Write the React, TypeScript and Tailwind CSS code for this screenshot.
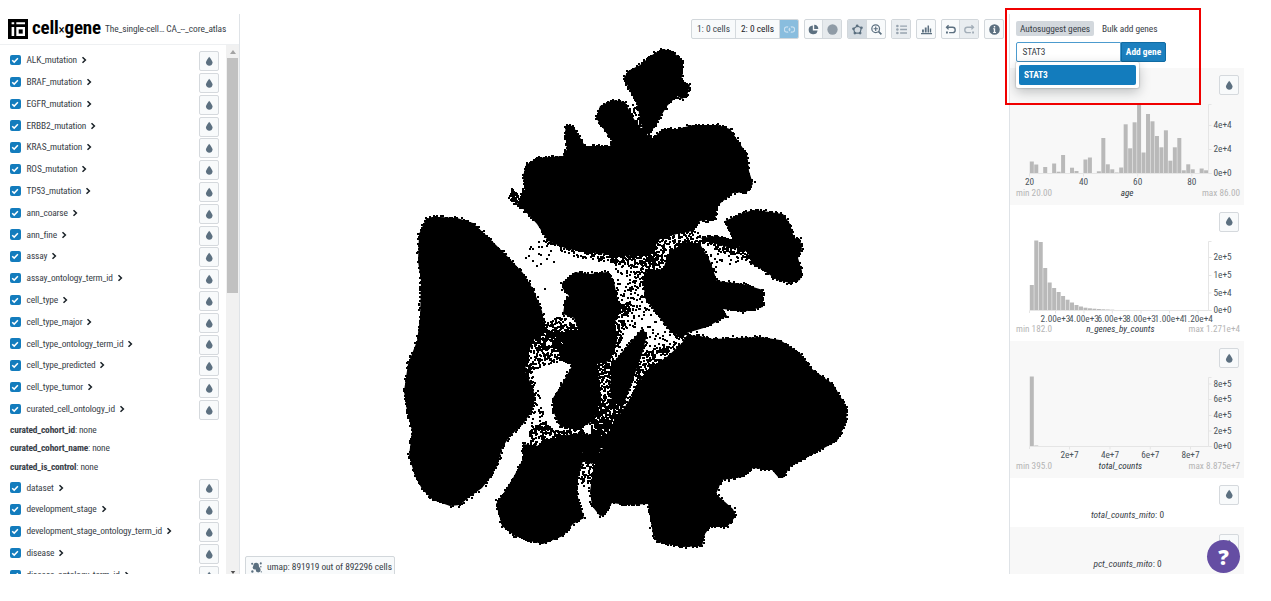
import React, { ReactNode } from "react";

type Pt = [number, number];

const FONT = "font-['Roboto_Condensed','Roboto',sans-serif] [font-stretch:75%]";

/* ---------- icons (16 × 16 grid) ---------- */

const Icon = ({ children, className = "" }: { children: ReactNode; className?: string }) => (
  <svg viewBox="0 0 16 16" className={`h-[11px] w-[11px] shrink-0 fill-current ${className}`}>
    {children}
  </svg>
);

const Drop = () => (
  <svg viewBox="0 0 16 16" className="h-[10.5px] w-[10.5px] shrink-0 fill-[#5c7080]">
    <path d="M7.88 1s-4.9 6.28-4.9 8.9c.01 2.82 2.34 5.1 4.99 5.1 2.65-.01 5.03-2.3 5.03-5.13C12.99 7.17 7.88 1 7.88 1z" />
  </svg>
);

const DropButton = () => (
  <div className="flex h-5 w-5 shrink-0 items-center justify-center rounded-[2px] border border-[#d5d9dd] bg-[#f8fafb]">
    <Drop />
  </div>
);

/* ---------- left sidebar ---------- */

const upper = [
  "ALK_mutation", "BRAF_mutation", "EGFR_mutation", "ERBB2_mutation", "KRAS_mutation",
  "ROS_mutation", "TP53_mutation", "ann_coarse", "ann_fine", "assay", "assay_ontology_term_id",
  "cell_type", "cell_type_major", "cell_type_ontology_term_id", "cell_type_predicted",
  "cell_type_tumor", "curated_cell_ontology_id",
];
const constants = ["curated_cohort_id", "curated_cohort_name", "curated_is_control"];
const lower = ["dataset", "development_stage", "development_stage_ontology_term_id", "disease", "disease_ontology_term_id"];

const Category = ({ name }: { name: string }) => (
  <div className="flex h-[21.81px] shrink-0 items-center pl-[10px] pr-[6.6px]">
    <div className="flex h-[10.5px] w-[10.5px] items-center justify-center rounded-[2px] bg-[#137cbd]">
      <svg viewBox="0 0 10 10" className="h-[10px] w-[10px] fill-none stroke-white stroke-[1.5]">
        <path d="M2.2 5.2 4.2 7.1 7.9 3.2" />
      </svg>
    </div>
    <span className="ml-[6px] whitespace-nowrap">{name}</span>
    <svg viewBox="0 0 6 8" className="ml-[4px] h-[8px] w-[6px] fill-none stroke-[#182026] stroke-[1.5]">
      <path d="M1.5 1.2 4.4 4 1.5 6.8" />
    </svg>
    <div className="ml-auto pt-[2px]"><DropButton /></div>
  </div>
);

const LeftSidebar = () => (
  <div className="flex h-[560px] w-[240px] shrink-0 flex-col border-r border-[#dfe3e7] tracking-[-0.11px]">
    <div className="flex h-[31px] shrink-0 items-center border-b border-[#eef0f2] pl-[8px]">
      <svg viewBox="0 0 20 20" className="h-5 w-5">
        <path d="M0 0h20v20H0z" className="fill-black" />
        <path d="M3.6 3.2h2.6v2H3.600zM3.600 8h2.600v9H3.600zM8.300 3.200H17v2H8.300zM8.300 8H17v9H8.300z" className="fill-white" />
        <path d="M10.700 10.400h4v4.200h-4z" className="fill-black" />
      </svg>
      <span className="ml-[4px] flex w-[69px] items-baseline whitespace-nowrap text-[19px] font-bold leading-5 tracking-[-0.2px] text-black">
        cell<span className="text-[13px] font-normal">×</span>gene
      </span>
      <span className="ml-[4px] whitespace-nowrap tracking-[-0.08px]">The_single-cell…</span>
      <span className="ml-[2px] whitespace-nowrap tracking-[-0.08px]">CA_--_core_atlas</span>
    </div>
    <div className="flex min-h-0 flex-1">
      <div className="flex min-w-0 flex-1 flex-col overflow-hidden pt-[4.300px]">
        {upper.map((n) => <Category key={n} name={n} />)}
        <div className="flex shrink-0 flex-col py-[1.2px] pl-[10px] tracking-[-0.14px]">
          {constants.map((n) => (
            <div key={n} className="flex h-[18.200px] items-center whitespace-pre">
              <b>{n}</b>: none
            </div>
          ))}
        </div>
        {lower.map((n) => <Category key={n} name={n} />)}
      </div>
      <div className="flex w-[13px] shrink-0 flex-col items-center overflow-hidden bg-[#f1f1f1]">
        <svg viewBox="0 0 6 4" className="mt-[5px] h-[4px] w-[6px] shrink-0 fill-[#a3a3a3]"><path d="M0 4 3 0 6 4z" /></svg>
        <div className="mt-[4px] h-[235px] w-[11px] shrink-0 bg-[#c1c1c1]" />
        <svg viewBox="0 0 6 4" className="mt-auto h-[3px] w-[6px] shrink-0 fill-[#505050]"><path d="M0 0h6L3 4z" /></svg>
      </div>
    </div>
  </div>
);

/* ---------- embedding scatter ---------- */

const clusters: Pt[][] = [
  [[426,218],[432,216],[440,216],[457,217],[473,222],[487,235],[507,255],[523,272],[533,288],[542,310],[545,327],[533,340],[528,353],[525,370],[533,387],[535,397],[532,410],[523,423],[510,435],[502,447],[498,463],[490,477],[482,487],[468,497],[460,504],[450,505],[433,499],[422,488],[415,475],[409,455],[412,430],[407,410],[404,390],[408,363],[417,340],[420,317],[421,280],[418,260],[419,233]],
  [[563,155],[537,157],[526,164],[523,175],[525,190],[519,201],[525,210],[537,223],[548,240],[567,248],[597,252],[627,255],[650,252],[660,238],[677,233],[693,230],[700,220],[715,218],[717,205],[733,192],[747,191],[753,183],[749,170],[747,153],[738,140],[730,128],[718,124],[693,124],[677,128],[663,128],[652,138],[643,130],[634,118],[628,107],[625,101],[613,99],[600,105],[596,117],[603,127],[612,140],[610,145],[597,145],[585,145],[578,133],[573,125],[566,124],[565,132],[567,148]],
  [[524,191],[530,200],[526,210],[517,203]],
  [[624,77],[628,70],[640,64],[652,54],[662,48],[672,50],[683,60],[683,72],[681,79],[690,84],[687,95],[682,98],[677,95],[667,105],[655,125],[649,134],[643,130],[637,103],[630,90]],
  [[725,220],[740,213],[753,209],[763,210],[783,213],[790,223],[794,237],[800,238],[802,248],[798,257],[802,270],[800,279],[790,282],[777,279],[763,269],[752,263],[748,252],[735,242]],
  [[700,237],[717,235],[733,240],[743,248],[727,246],[713,242]],
  [[670,250],[687,241],[700,243],[710,260],[717,280],[743,283],[763,289],[763,306],[743,311],[723,308],[727,315],[707,326],[687,332],[682,337],[670,330],[657,313],[645,297],[643,277],[647,270],[663,268]],
  [[687,334],[700,335],[713,338],[737,337],[760,336],[780,339],[800,352],[812,368],[833,383],[843,400],[847,407],[846,422],[837,440],[813,453],[790,466],[783,477],[778,476],[772,469],[753,467],[743,476],[722,479],[716,493],[733,508],[736,515],[727,526],[710,526],[705,533],[702,545],[683,546],[657,541],[653,533],[648,503],[627,504],[612,502],[605,514],[600,515],[592,505],[590,490],[593,470],[600,453],[609,433],[620,413],[632,395],[640,380],[650,367],[668,355],[682,342]],
  [[642,328],[647,333],[643,350],[637,367],[631,384],[623,405],[612,400],[610,387],[612,363],[623,350]],
  [[562,282],[575,271],[590,273],[607,271],[614,280],[617,297],[621,307],[614,323],[617,340],[610,360],[597,363],[600,387],[600,400],[593,420],[577,429],[560,425],[553,410],[553,397],[562,383],[572,365],[560,350],[567,340],[580,333],[574,317],[563,313],[565,300],[569,295],[563,288]],
  [[523,443],[540,445],[560,435],[582,432],[583,460],[578,477],[577,493],[584,517],[573,523],[563,535],[543,543],[530,540],[515,535],[502,525],[496,503],[505,490],[513,477],[523,458]],
  [[582,432],[603,437],[598,458],[592,463],[583,460]],
];

/* regions of scattered cells: outline and cells per square pixel */
const scattered: [Pt[], number][] = [
  [[[508,196],[512,188],[520,193],[524,186],[530,200],[526,210],[517,206]], 0.4],
  [[[540,240],[550,240],[660,250],[655,264],[610,262],[575,256]], 0.14],
  [[[580,246],[660,248],[652,272],[625,264],[590,256]], 0.18],
  [[[522,262],[536,232],[560,245],[545,300],[540,302]], 0.015],
  [[[612,258],[650,262],[648,300],[620,318],[614,280]], 0.07],
  [[[616,305],[632,300],[626,330],[612,368],[608,345]], 0.22],
  [[[630,270],[644,270],[652,300],[682,340],[650,355],[640,325],[625,330]], 0.05],
  [[[535,326],[552,318],[567,316],[582,333],[570,345],[535,348]], 0.3],
  [[[535,330],[572,330],[575,358],[545,364],[526,374],[526,345]], 0.22],
  [[[552,332],[585,330],[578,366],[562,360]], 0.7],
  [[[525,365],[533,370],[541,400],[545,420],[530,440],[533,400]], 0.09],
  [[[530,428],[545,420],[555,430],[585,428],[580,438],[530,448]], 0.35],
  [[[596,362],[612,360],[614,400],[622,405],[600,460],[588,455],[592,425]], 0.25],
  [[[596,400],[625,400],[608,446],[590,440]], 0.3],
  [[[582,455],[602,455],[592,480],[584,486],[578,480]], 0.15],
  [[[645,350],[676,342],[660,362],[640,384],[632,396],[634,376]], 0.3],
  [[[700,238],[735,236],[752,262],[735,256],[708,246]], 0.2],
  [[[708,248],[745,255],[735,270],[715,268]], 0.035],
  [[[655,238],[697,230],[705,242],[672,249],[660,272],[646,266]], 0.19],
  [[[750,457],[772,457],[770,470],[755,470]], 0.1],
  [[[632,104],[640,106],[644,128],[638,124]], 0.15],
  [[[704,215],[718,202],[716,220],[702,222]], 0.25],
];

const inside = (x: number, y: number, poly: Pt[]) => {
  let hit = false;
  for (let i = 0, j = poly.length - 1; i < poly.length; j = i++) {
    const [xi, yi] = poly[i];
    const [xj, yj] = poly[j];
    if (yi > y !== yj > y && x < ((xj - xi) * (y - yi)) / (yj - yi) + xi) hit = !hit;
  }
  return hit;
};

const buildCells = () => {
  let seed = 7919;
  const rnd = () => {
    seed = (seed * 1664525 + 1013904223) % 4294967296;
    return seed / 4294967296;
  };
  let d = "";
  const cell = (x: number, y: number) => {
    d += `M${Math.round(x)} ${Math.round(y)}h2v2h-2z`;
  };
  clusters.forEach((poly) => {
    poly.forEach(([x1, y1], i) => {
      const [x2, y2] = poly[(i + 1) % poly.length];
      const n = Math.ceil(Math.hypot(x2 - x1, y2 - y1) / 2.6);
      for (let k = 0; k < n; k++) {
        const t = k / n;
        const reach = rnd() < 0.12 ? 4.5 : 2;
        cell(x1 + (x2 - x1) * t - 1 + (rnd() - 0.5) * reach, y1 + (y2 - y1) * t - 1 + (rnd() - 0.5) * reach);
      }
    });
  });
  scattered.forEach(([poly, density]) => {
    const xs = poly.map((p) => p[0]);
    const ys = poly.map((p) => p[1]);
    const x0 = Math.min(...xs), w = Math.max(...xs) - x0;
    const y0 = Math.min(...ys), h = Math.max(...ys) - y0;
    const n = w * h * density;
    for (let k = 0; k < n; k++) {
      const x = x0 + rnd() * w, y = y0 + rnd() * h;
      if (inside(x, y, poly)) cell(x - 1, y - 1);
    }
  });
  return d;
};

const cells = buildCells();

const Scatter = () => (
  <svg viewBox="400 39 450 510" className="ml-[160px] block h-[510px] w-[450px] shrink-0 fill-black">
    {clusters.map((p, i) => <polygon key={i} points={p.map((q) => q.join(",")).join(" ")} />)}
    <path d={cells} />
  </svg>
);

/* ---------- toolbar ---------- */

const Tool = ({ className = "", children }: { className?: string; children: ReactNode }) => (
  <div className={`flex h-full items-center justify-center ${className}`}>{children}</div>
);

const Group = ({ className = "", children }: { className?: string; children: ReactNode }) => (
  <div className={`flex h-5 shrink-0 divide-x divide-[#d5dade] overflow-hidden rounded-[2px] border border-[#d2d7db] bg-[#f8fafb] text-[#5c7080] ${className}`}>
    {children}
  </div>
);

const Toolbar = () => (
  <div className="flex h-[26px] shrink-0 items-start justify-end gap-[5px] pr-[5px] pt-[5px]">
    <Group className="w-[108px]">
      <Tool className="w-[44px] text-[#3b4650]">1: 0 cells</Tool>
      <Tool className="w-[44px] text-[#182026]">2: 0 cells</Tool>
      <Tool className="flex-1 bg-[#89bdde] text-[#c9e0f0]">
        <Icon>
          <path d="M6.600 3.800a4.800 4.800 0 1 0 0 8.400 6.500 6.500 0 0 1-1.200-1.700 2.800 2.800 0 1 1 0-5 6.500 6.500 0 0 1 1.200-1.700zM9.400 3.800a4.800 4.800 0 1 1 0 8.400 6.500 6.500 0 0 0 1.200-1.700 2.800 2.800 0 1 0 0-5 6.500 6.500 0 0 0-1.200-1.700zM8 5a4.500 4.500 0 0 1 0 6 4.500 4.500 0 0 1 0-6z" />
        </Icon>
      </Tool>
    </Group>
    <Group className="w-[38px]">
      <Tool className="w-[18px]">
        <Icon><path d="M7 2a6.500 6.500 0 1 0 6.900 7.400H7zM9 1v6.300h6A6.300 6.300 0 0 0 9 1z" /></Icon>
      </Tool>
      <Tool className="flex-1 bg-[#e6eaed] text-[#8f9ba6]"><Icon><circle cx="8" cy="8" r="7.500" /></Icon></Tool>
    </Group>
    <Group className="w-[39px]">
      <Tool className="w-[19px] bg-[#d5dce2]">
        <Icon>
          <path d="M7.500 3 13.500 5.500 11.800 13.200H4.200L2.200 7z" className="fill-none stroke-current stroke-[1.700]" />
          <circle cx="7.500" cy="2.800" r="2" /><circle cx="13.700" cy="5.600" r="2" />
          <circle cx="11.800" cy="13.200" r="2" /><circle cx="4.200" cy="13.200" r="2" /><circle cx="2.200" cy="7" r="2" />
        </Icon>
      </Tool>
      <Tool className="flex-1">
        <Icon>
          <circle cx="6.800" cy="6.800" r="5.600" className="fill-none stroke-current stroke-[1.800]" />
          <path d="M6 3.800h1.700V6H10v1.700H7.700V10H6V7.700H3.800V6H6zM10.200 12 12 10.200l4 4-1.800 1.800z" />
        </Icon>
      </Tool>
    </Group>
    <Group className="w-[20px]">
      <Tool className="w-full bg-[#e9edf0] text-[#98a4af]">
        <Icon>
          <circle cx="2" cy="3" r="1.900" /><circle cx="2" cy="8" r="1.900" /><circle cx="2" cy="13" r="1.900" />
          <path d="M6 2h10v2H6zM6 7h10v2H6zM6 12h10v2H6z" />
        </Icon>
      </Tool>
    </Group>
    <Group className="w-[20px]">
      <Tool className="w-full">
        <Icon><path d="M0 13h16v2H0zM1.500 8h2.700v4.500H1.500zM5.500 5h2.700v7.500H5.500zM9.500 2h2.200v10.500H9.500zM12.800 6.500h2v6h-2z" /></Icon>
      </Tool>
    </Group>
    <Group className="w-[38px]">
      <Tool className="w-[18px]">
        <Icon><path d="M4.500 1 0.800 4.800 4.500 8.500 5.900 7.200 4.600 5.800H11a2.800 2.800 0 0 1 0 5.700H6v2h5a4.800 4.800 0 0 0 0-9.700H4.600L5.900 2.400zM1.500 11h2.700v2.700H1.500z" /></Icon>
      </Tool>
      <Tool className="flex-1 bg-[#e9edf0] text-[#a3aeb8]">
        <Icon><path d="M11.500 1l3.700 3.800-3.700 3.700-1.400-1.300 1.300-1.400H5a2.800 2.800 0 0 0 0 5.700h5v2H5a4.800 4.800 0 0 1 0-9.700h6.400l-1.300-1.400zM11.800 11h2.700v2.700h-2.700z" /></Icon>
      </Tool>
    </Group>
    <Group className="w-[20px]">
      <Tool className="w-full">
        <Icon>
          <path fillRule="evenodd" d="M8 .3a7.700 7.700 0 1 1 0 15.400A7.700 7.700 0 0 1 8 .3zM7 3v2h2V3zM6 6.300v1.200h1v4.300H6V13h4.200v-1.200h-1.200V6.300z" />
        </Icon>
      </Tool>
    </Group>
  </div>
);

const Center = () => (
  <div className="flex h-[560px] w-[769px] shrink-0 flex-col overflow-hidden">
    <Toolbar />
    <Scatter />
    <div className="ml-[5px] mt-[6px] flex h-[22px] w-[150px] shrink-0 items-center gap-[5px] rounded-[2px] border border-[#d2d7db] bg-[#f8fafb] pl-[5px]">
      <Icon className="text-[#5c7080]">
        <circle cx="1.700" cy="2.500" r="1.500" /><circle cx="2" cy="13.800" r="1.700" />
        <circle cx="7.500" cy="5" r="3.900" /><circle cx="5.300" cy="8" r="2.800" /><circle cx="10.500" cy="11.500" r="3.600" />
        <path d="M4 7 9 14 13 9 10 4z" />
        <circle cx="14.200" cy="2" r="1.500" /><circle cx="14.300" cy="7" r="1.100" /><circle cx="15" cy="14.300" r="1" />
      </Icon>
      <span className="whitespace-nowrap tracking-[-0.04px]">umap: 891919 out of 892296 cells</span>
    </div>
  </div>
);

/* ---------- right sidebar ---------- */

type Hist = {
  name: string; min: string; max: string; bars: number[];
  x: [number, string][]; y: [number, string][]; className: string;
};

const hists: Hist[] = [
  {
    name: "age", min: "20.00", max: "86.00", className: "bg-[#f8f8f8]",
    bars: [11.5,8.5,0,6,0,9.5,1.3,18,0,5.3,2,0,13.5,15.5,0,1.7,35,8.7,3.7,0.5,5.5,48.7,24.7,50.7,69,20.5,59,51.7,37,25.7,42.7,12.3,25.7,35,2.7,8.7,3.7,0,4.5,2.7],
    x: [[19.5,"20"],[73.5,"40"],[127.7,"60"],[181.8,"80"]],
    y: [[0,"0e+0"],[24,"2e+4"],[48,"4e+4"]],
  },
  {
    name: "n_genes_by_counts", min: "182.0", max: "1.271e+4", className: "bg-white",
    bars: [25,69.5,68,42,27.5,22,18,14,10.3,7.5,5,3.5,2.3,1.7,1.3,1,.7,.5,.3],
    x: [[45.5,"2.00e+3"],[74,"4.00e+3"],[102.3,"6.00e+3"],[131,"8.00e+3"],[159.5,"1.00e+4"],[188,"1.20e+4"]],
    y: [[0,"0e+0"],[17.5,"5e+4"],[35,"1e+5"],[53,"2e+5"]],
  },
  {
    name: "total_counts", min: "395.0", max: "8.875e+7", className: "bg-[#f8f8f8]",
    bars: [69.5,.5],
    x: [[59.5,"2e+7"],[100,"4e+7"],[140.3,"6e+7"],[180.5,"8e+7"]],
    y: [[0,"0e+0"],[15.5,"2e+5"],[31,"4e+5"],[47,"6e+5"],[62.5,"8e+5"]],
  },
];

const Histogram = ({ h }: { h: Hist }) => (
  <div className={`flex h-[136.7px] shrink-0 flex-col ${h.className}`}>
    <div className="flex h-[27px] shrink-0 justify-end pr-[4.6px] pt-[7px]"><DropButton /></div>
    <svg viewBox="0 27 234 92.500" className="block h-[92.500px] w-[234px] shrink-0">
      <g className="fill-[#b9b9b9]">
        {h.bars.map((b, i) => <rect key={i} x={19.8 + i * 4.47} y={105 - b} width={4} height={b} />)}
      </g>
      <g className="fill-none stroke-[#e5e5e5]">
        <path d="M19.500 108v-2.500h179M201.500 36.500h-3v69h3" />
        {h.x.map(([x]) => <path key={x} d={`M${x} 105.500v3`} />)}
        {h.y.map(([y]) => <path key={y} d={`M198.500 ${105.5 - y}h3`} />)}
      </g>
      <g className="fill-[#4c555c] text-[9.300px]">
        {h.x.map(([x, t]) => <text key={t} x={x} y={117} textAnchor="middle">{t}</text>)}
        {h.y.map(([y, t]) => <text key={t} x={203.500} y={108.200 - y}>{t}</text>)}
      </g>
    </svg>
    <div className="flex justify-between pl-[6px] pr-[4px] text-[9.200px] leading-[10px] text-[#b5b5b5]">
      <span>min {h.min}</span>
      <i className="text-[#30383f]">{h.name}</i>
      <span>max {h.max}</span>
    </div>
  </div>
);

const Single = ({ name, className }: { name: string; className: string }) => (
  <div className={`flex h-[49.300px] shrink-0 flex-col ${className}`}>
    <div className="flex h-[27px] shrink-0 justify-end pr-[4.600px] pt-[6.500px]"><DropButton /></div>
    <div className="pl-[1px] pt-[3.500px] text-center leading-[12px]"><i>{name}</i>: 0</div>
  </div>
);

const RightSidebar = () => (
  <div className="flex h-[560px] w-[235px] shrink-0 flex-col overflow-hidden border-l border-[#dfe3e7]">
    <div className="flex h-[54px] shrink-0 flex-col pl-[6px] pt-[7px]">
      <div className="flex h-[15px] gap-[8px] tracking-[-0.07px]">
        <div className="flex w-[78px] items-center justify-center rounded-[2px] bg-[#d3d8dd]">Autosuggest genes</div>
        <div className="flex items-center">Bulk add genes</div>
      </div>
      <div className="relative mt-[6px] flex h-[20px]">
        <div className="flex w-[105px] items-center rounded-l-[2px] border border-[#4c9bce] bg-white pl-[5.500px] tracking-[-0.2px]">STAT3</div>
        <div className="flex w-[45px] items-center justify-center rounded-r-[2px] border border-[#106ba3] bg-[#1c80bf] font-bold text-white">Add gene</div>
        <div className="absolute left-0 top-[20px] flex h-[26px] w-[123px] rounded-[2px] bg-white p-[3px] shadow-[0_0_1px_1px_rgba(16,22,26,0.12),0_4px_12px_rgba(16,22,26,0.25)]">
          <div className="flex flex-1 items-center rounded-[2px] bg-[#137cbd] pl-[5px] font-bold tracking-[-0.2px] text-white">STAT3</div>
        </div>
      </div>
    </div>
    {hists.map((h) => <Histogram key={h.name} h={h} />)}
    <Single name="total_counts_mito" className="bg-white" />
    <Single name="pct_counts_mito" className="bg-[#f8f8f8]" />
  </div>
);

export default function App() {
  return (
    <div className={`relative flex h-[601px] w-[1271px] overflow-hidden bg-white pt-[14px] text-[9.400px] leading-[12px] text-[#394148] ${FONT}`}>
      <LeftSidebar />
      <Center />
      <RightSidebar />
      <div className="absolute left-[1005px] top-[8px] h-[97px] w-[196px] border-2 border-[#f00000]" />
      <div className="absolute left-[1207px] top-[540px] flex h-[33px] w-[33px] items-center justify-center rounded-full bg-[#654ea3] font-['Open_Sans',sans-serif] text-[21px] font-extrabold text-white [font-stretch:100%]">
        ?
      </div>
    </div>
  );
}
